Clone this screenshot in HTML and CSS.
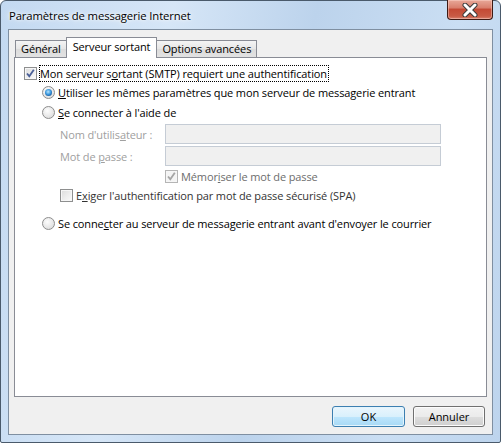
FILE: index.html
```html
<!DOCTYPE html>
<html lang="fr">

<head>
    <meta charset="UTF-8">
    <meta name="viewport" content="width=device-width, initial-scale=1.0">
    <title>Paramètres de messagerie Internet</title>
    <link rel="stylesheet" href="styles.css">
</head>

<body>
    <div class="window">
        <div class="titlebar">
            <span class="title">Paramètres de messagerie Internet</span>
            <div class="close">
                <svg width="16" height="14" viewBox="0 0 16 14">
                    <path d="M3 2 L13 12 M13 2 L3 12" stroke="#3a3a3a" stroke-width="5" stroke-linecap="round" />
                    <path d="M3 2 L13 12 M13 2 L3 12" stroke="#ffffff" stroke-width="3" stroke-linecap="round" />
                </svg>
            </div>
        </div>

        <div class="client">
            <div class="tabs">
                <div class="tab">Général</div>
                <div class="tab active">Serveur sortant</div>
                <div class="tab">Options avancées</div>
            </div>

            <div class="panel">
                <div class="row">
                    <span class="check checked"></span>
                    <span class="focus">Mon serveur s<u>o</u>rtant (SMTP) requiert une authentification</span>
                </div>

                <div class="group">
                    <div class="row">
                        <span class="radio on"></span>
                        <span><u>U</u>tiliser les mêmes paramètres que mon serveur de messagerie entrant</span>
                    </div>
                    <div class="row gap3">
                        <span class="radio"></span>
                        <span><u>S</u>e connecter à l'aide de</span>
                    </div>

                    <div class="sub">
                        <div class="field">
                            <label>Nom d'utilis<u>a</u>teur :</label>
                            <div class="input"></div>
                        </div>
                        <div class="field">
                            <label>Mot de <u>p</u>asse :</label>
                            <div class="input"></div>
                        </div>
                        <div class="row remember">
                            <span class="check checked disabled"></span>
                            <span class="grey">Mémor<u>i</u>ser le mot de passe</span>
                        </div>
                        <div class="row">
                            <span class="check"></span>
                            <span class="dark">E<u>x</u>iger l'authentification par mot de passe sécurisé (SPA)</span>
                        </div>
                    </div>

                    <div class="row last">
                        <span class="radio"></span>
                        <span>Se conne<u>c</u>ter au serveur de messagerie entrant avant d'envoyer le courrier</span>
                    </div>
                </div>
            </div>

            <div class="buttons">
                <button class="btn default">OK</button>
                <button class="btn">Annuler</button>
            </div>
        </div>
    </div>
</body>

</html>
```

FILE: styles.css
```css
body {
    margin: 0;
    padding: 0;
    font-family: "Open Sans", "Noto Sans", sans-serif;
    font-size: 11px;
    letter-spacing: -0.12px;
    color: #000;
}

.window {
    box-sizing: border-box;
    width: 501px;
    height: 443px;
    border: 1px solid #4a5a6b;
    border-radius: 6px 6px 2px 2px;
    padding: 0 7px 7px 7px;
    background: linear-gradient(100deg, #c3d9f1 0%, #d6e6f7 30%, #bcd3ec 55%, #cadef3 80%, #bdd4ed 100%);
    display: flex;
    flex-direction: column;
}

.titlebar {
    height: 28px;
    display: flex;
    justify-content: space-between;
    align-items: center;
}

.title {
    padding-left: 1px;
    font-size: 11.3px;
    text-shadow: 0 0 6px #fff, 0 0 3px #fff;
}

.close {
    align-self: flex-start;
    margin-top: -1px;
    box-sizing: border-box;
    width: 46px;
    height: 20px;
    border: 1px solid #3d1a14;
    border-top: none;
    border-radius: 0 0 4px 4px;
    background: linear-gradient(#e8a898 0%, #d9806e 40%, #c44a35 50%, #c85a44 85%, #d8826f 100%);
    box-shadow: inset 0 0 0 1px rgba(255, 220, 210, 0.45);
    display: flex;
    justify-content: center;
    align-items: center;
}

.client {
    box-sizing: border-box;
    flex: 1;
    border: 1px solid #7f8fa1;
    background-color: #f0f0f0;
    padding: 7px 6px 7px 5px;
    display: flex;
    flex-direction: column;
}

.tabs {
    display: flex;
    align-items: flex-end;
    padding-left: 1px;
    height: 20px;
}

.tab {
    box-sizing: border-box;
    height: 17px;
    padding: 0 5px;
    border: 1px solid #898c95;
    border-bottom: none;
    background: linear-gradient(#f4f4f4, #e6e6e6 50%, #dcdcdc 51%, #e2e2e2);
    line-height: 15px;
    white-space: nowrap;
}

.tab + .tab {
    margin-left: -1px;
}

.tab.active {
    position: relative;
    z-index: 1;
    height: 21px;
    margin-bottom: -1px;
    padding: 1px 6px 0 6px;
    background: #fff;
    line-height: 15px;
}

.panel {
    box-sizing: border-box;
    height: 340px;
    width: 473px;
    border: 1px solid #898c95;
    background-color: #fff;
    padding: 7px 9px;
}

.row {
    display: flex;
    align-items: center;
    height: 17px;
    line-height: 15px;
    white-space: nowrap;
}

.check {
    box-sizing: border-box;
    flex: none;
    width: 13px;
    height: 13px;
    border: 1px solid #8e8f8f;
    background: linear-gradient(135deg, #dcdcdc, #fbfbfb);
    box-shadow: inset 0 0 0 1px #f6f6f6;
    margin-right: 3px;
}

.check.checked {
    background-image: url("data:image/svg+xml;utf8,<svg xmlns='http://www.w3.org/2000/svg' width='11' height='11'><path d='M2 5.5 L4.3 8.2 L8.8 1.8' fill='none' stroke='%234a5f97' stroke-width='1.8'/></svg>"), linear-gradient(135deg, #dcdcdc, #fbfbfb);
    background-repeat: no-repeat;
}

.check.disabled {
    border-color: #b5b5b5;
    background-image: url("data:image/svg+xml;utf8,<svg xmlns='http://www.w3.org/2000/svg' width='11' height='11'><path d='M2 5.5 L4.3 8.2 L8.8 1.8' fill='none' stroke='%23a5a5a5' stroke-width='1.8'/></svg>"), linear-gradient(#f4f4f4, #f4f4f4);
}

.focus {
    margin-left: -1px;
    border: 1px dotted #000;
    padding: 0 1px 0 0;
}

.group {
    padding-left: 18px;
    margin-top: 2px;
}

.radio {
    box-sizing: border-box;
    flex: none;
    width: 13px;
    height: 13px;
    border-radius: 50%;
    border: 1px solid #8d8d8d;
    background: radial-gradient(circle at 40% 35%, #fdfdfd, #e2e2e2 70%, #d2d2d2);
    margin-right: 3px;
    display: flex;
    justify-content: center;
    align-items: center;
}

.radio.on::after {
    content: "";
    width: 7px;
    height: 7px;
    border-radius: 50%;
    background: radial-gradient(circle at 45% 40%, #b8e4fc 0%, #3e9be0 45%, #1a5fa3 75%, #0f3f73 100%);
}

.gap3 {
    margin-top: 3px;
}

.sub {
    padding-left: 18px;
    margin-top: 3px;
}

.field {
    display: flex;
    align-items: center;
    height: 20px;
    margin-bottom: 2px;
}

.field label {
    width: 105px;
    color: #a0a0a0;
    white-space: nowrap;
}

.input {
    box-sizing: border-box;
    width: 276px;
    height: 20px;
    border: 1px solid #c5ccd5;
    background-color: #f0f0f0;
}

.remember {
    padding-left: 105px;
    margin-top: 1px;
}

.remember + .row {
    margin-top: 2px;
}

.grey {
    color: #6d6d6d;
}

.dark {
    color: #333;
}

.row.last {
    margin-top: 11px;
}

.buttons {
    display: flex;
    justify-content: flex-end;
    gap: 8px;
    margin-top: 9px;
    padding-right: 1px;
}

.btn {
    box-sizing: border-box;
    width: 72px;
    height: 21px;
    padding: 0;
    font-family: "Open Sans", "Noto Sans", sans-serif;
    font-size: 11px;
    color: #000;
    border: 1px solid #707070;
    border-radius: 3px;
    background: linear-gradient(#f2f2f2 0%, #ebebeb 50%, #dddddd 51%, #cfcfcf 100%);
    box-shadow: inset 0 0 0 1px #fcfcfc;
}

.btn.default {
    width: 73px;
    border-color: #3c7fb1;
    background: linear-gradient(#eaf6fd 0%, #d9f0fc 50%, #bee6fd 51%, #a7d9f5 100%);
    box-shadow: inset 0 0 0 1px #e4f4fc;
}
```
